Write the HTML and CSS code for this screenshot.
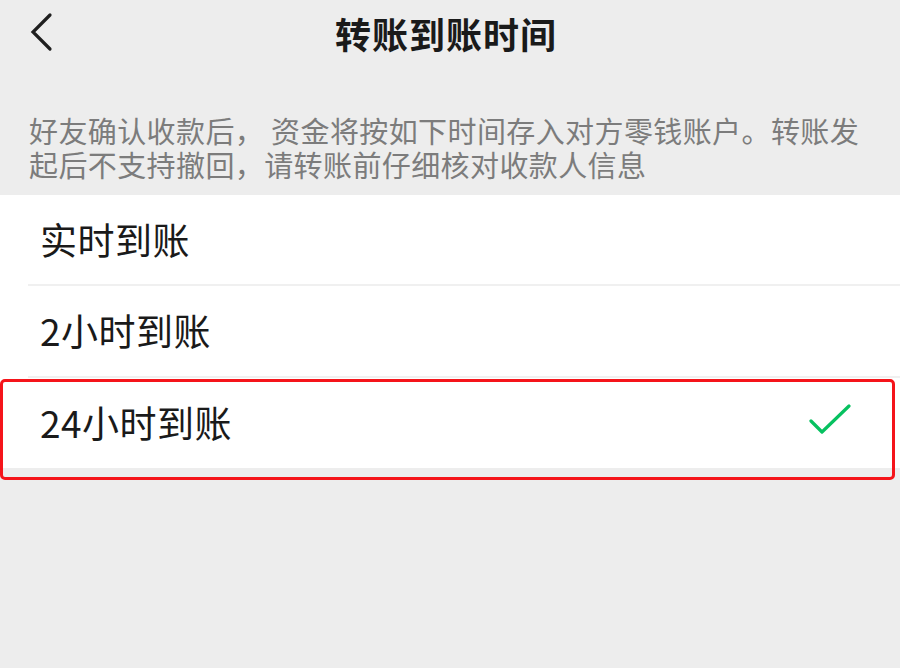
FILE: index.html
```html
<!DOCTYPE html>
<html>
<head>
<meta charset="utf-8">
<title>转账到账时间</title>
<link rel="stylesheet" href="styles.css">
</head>
<body>
<div class="page">
  <div class="nav">
    <a class="back">
      <svg width="24" height="40" viewBox="0 0 24 40"><polyline points="20,3 3,20 20,37" fill="none" stroke="#1f1f1f" stroke-width="3.2" stroke-linecap="round" stroke-linejoin="miter"/></svg>
    </a>
    <h1>转账到账时间</h1>
    <span></span>
  </div>
  <p class="tip">好友确认收款后， 资金将按如下时间存入对方零钱账户。转账发起后不支持撤回，请转账前仔细核对收款人信息</p>
  <ul class="opts">
    <li><span>实时到账</span></li>
    <li><span>2小时到账</span></li>
    <li class="on"><span>24小时到账</span>
      <svg class="tick" width="44" height="32" viewBox="0 0 44 32"><polyline points="3,17 14,28 41,2" fill="none" stroke="#07c160" stroke-width="3.2" stroke-linecap="round" stroke-linejoin="round"/></svg>
    </li>
  </ul>
  <div class="mark"></div>
</div>
</body>
</html>
```
FILE: styles.css
```css
html,body{ margin:0; padding:0; background:#ededed;}
body{ font-family:"Noto Sans CJK SC","Noto Sans",sans-serif; color:#1a1a1a;}
ul,li,p,h1{ margin:0; padding:0; list-style:none;}
.page{ position:relative; width:900px; height:668px; overflow:hidden;}
.nav{ display:grid; grid-template-columns:1fr auto 1fr; align-items:center; height:66px;}
.back{ display:block; padding-left:30px; height:40px; margin-top:-2px;}
.nav h1{ font-size:36px; font-weight:bold; color:#1a1a1a; letter-spacing:1px; margin-left:-8px;}
.tip{ padding:47px 30px 14px 29px; font-size:29px; line-height:34px; color:#7c7c7c; letter-spacing:0.4px;}
.opts{ background:#fff; margin-top:0;}
.opts li{ display:flex; align-items:center; justify-content:space-between; height:90px; margin-left:28px; padding-left:12px; padding-right:48px; border-top:2px solid #f0f0f0; font-size:37px; line-height:40px; letter-spacing:0.5px;}
.opts li:first-child{ border-top:none; height:89px;}
.opts li span{ margin-top:-2px;}
.tick{ display:block; margin-top:-6px;}
.mark{ position:absolute; left:0; top:379px; width:889px; height:95px; border:3px solid #f5141a; border-radius:5px;}
```
